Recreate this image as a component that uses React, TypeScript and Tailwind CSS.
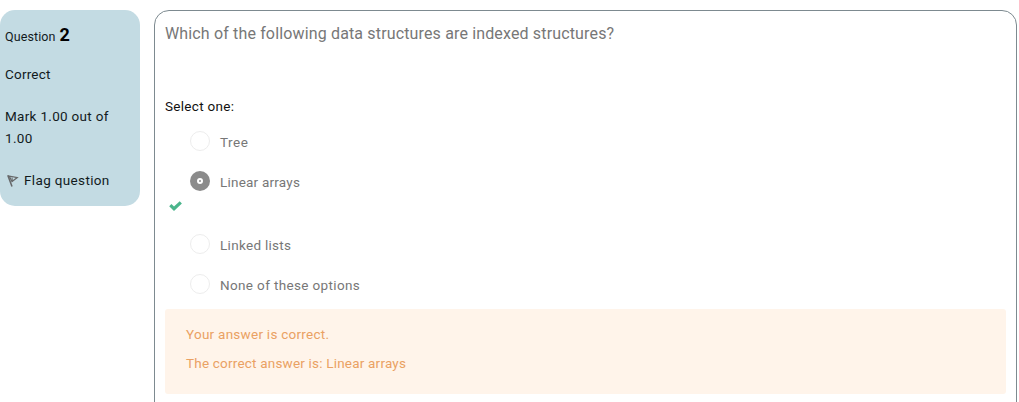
import React from 'react';

type OptionProps = { label: string; checked?: boolean; spacing: string };

function Option({ label, checked = false, spacing }: OptionProps) {
  return (
    <label className="flex h-10 items-start gap-[10px] pl-[25px]">
      {checked ? (
        <span className="flex size-5 shrink-0 items-center justify-center rounded-full bg-[#8b8b8b]">
          <span className="size-[6px] rounded-full border-2 border-white bg-[#8b8b8b]" />
        </span>
      ) : (
        <span className="size-5 shrink-0 rounded-full border border-[#ededed] bg-white" />
      )}
      <span className={`pt-px text-[13.5px] leading-5 text-[#777] ${spacing}`}>{label}</span>
    </label>
  );
}

function FlagIcon() {
  return (
    <svg className="mt-[5px] h-[14px] w-3 shrink-0" viewBox="0 0 12 14" fill="none" stroke="#66686a">
      <path d="M0.8 1.2 L5 12.5" strokeWidth="1.6" />
      <path d="M2.2 2 L10.3 3.6 L5 7.6 Z" strokeWidth="1.2" />
      <path d="M5 3.4 L5.4 7.4" strokeWidth="1" />
    </svg>
  );
}

export default function App() {
  return (
    <div className="flex h-[402px] w-[1019px] items-start overflow-hidden bg-white pt-[10px] font-['Roboto',sans-serif]">
      <aside className="h-[196px] w-[140px] shrink-0 rounded-[15px] bg-[#c3dbe3] pl-[5px] text-[13.5px] leading-[22px] text-[#121a1d]">
        <h3 className="flex h-[22px] items-baseline gap-1 pt-[14px]">
          <span className="text-[12.5px] tracking-[0.1px]">Question</span>
          <span className="text-[18px] font-bold text-black">2</span>
        </h3>
        <div className="mt-[31px] tracking-[0.2px]">Correct</div>
        <div className="mt-5 tracking-[0.3px]">
          Mark 1.00 out of
          <br />
          1.00
        </div>
        <div className="mt-5 flex gap-[5px] pl-[2px] tracking-[0.35px]">
          <FlagIcon />
          <span>Flag question</span>
        </div>
      </aside>

      <main className="ml-[14px] h-[420px] w-[863px] shrink-0 rounded-[15px] border border-[#7d8a90] px-[10px] pt-3">
        <p className="h-[72px] whitespace-nowrap text-[16px] leading-[22px] tracking-[0.15px] text-[#777]">
          Which of the following data structures are indexed structures?
        </p>
        <div className="h-9 text-[13.5px] leading-[22px] tracking-[0.3px] text-[#111]">Select one:</div>
        <Option label="Tree" spacing="tracking-[0.5px]" />
        <Option label="Linear arrays" checked spacing="tracking-[0.22px]" />
        <div className="-mt-[10px] h-[33px] pl-1">
          <svg className="h-[10px] w-[13px]" viewBox="0 0 13 10" fill="none" stroke="#4bb58c" strokeWidth="3.2">
            <path d="M1.3 4.2 L5 7.7 L11.8 1.3" />
          </svg>
        </div>
        <Option label="Linked lists" spacing="tracking-[0.3px]" />
        <Option label="None of these options" spacing="tracking-[0.36px]" />
        <div className="mt-[-5px] h-[85px] rounded-[3px] bg-[#fff4ea] pl-[21px] pt-[14px] text-[13.5px] leading-[22px] text-[#eaa163]">
          <p className="tracking-[0.26px]">Your answer is correct.</p>
          <p className="mt-[7px] tracking-[0.2px]">The correct answer is: Linear arrays</p>
        </div>
      </main>
    </div>
  );
}
